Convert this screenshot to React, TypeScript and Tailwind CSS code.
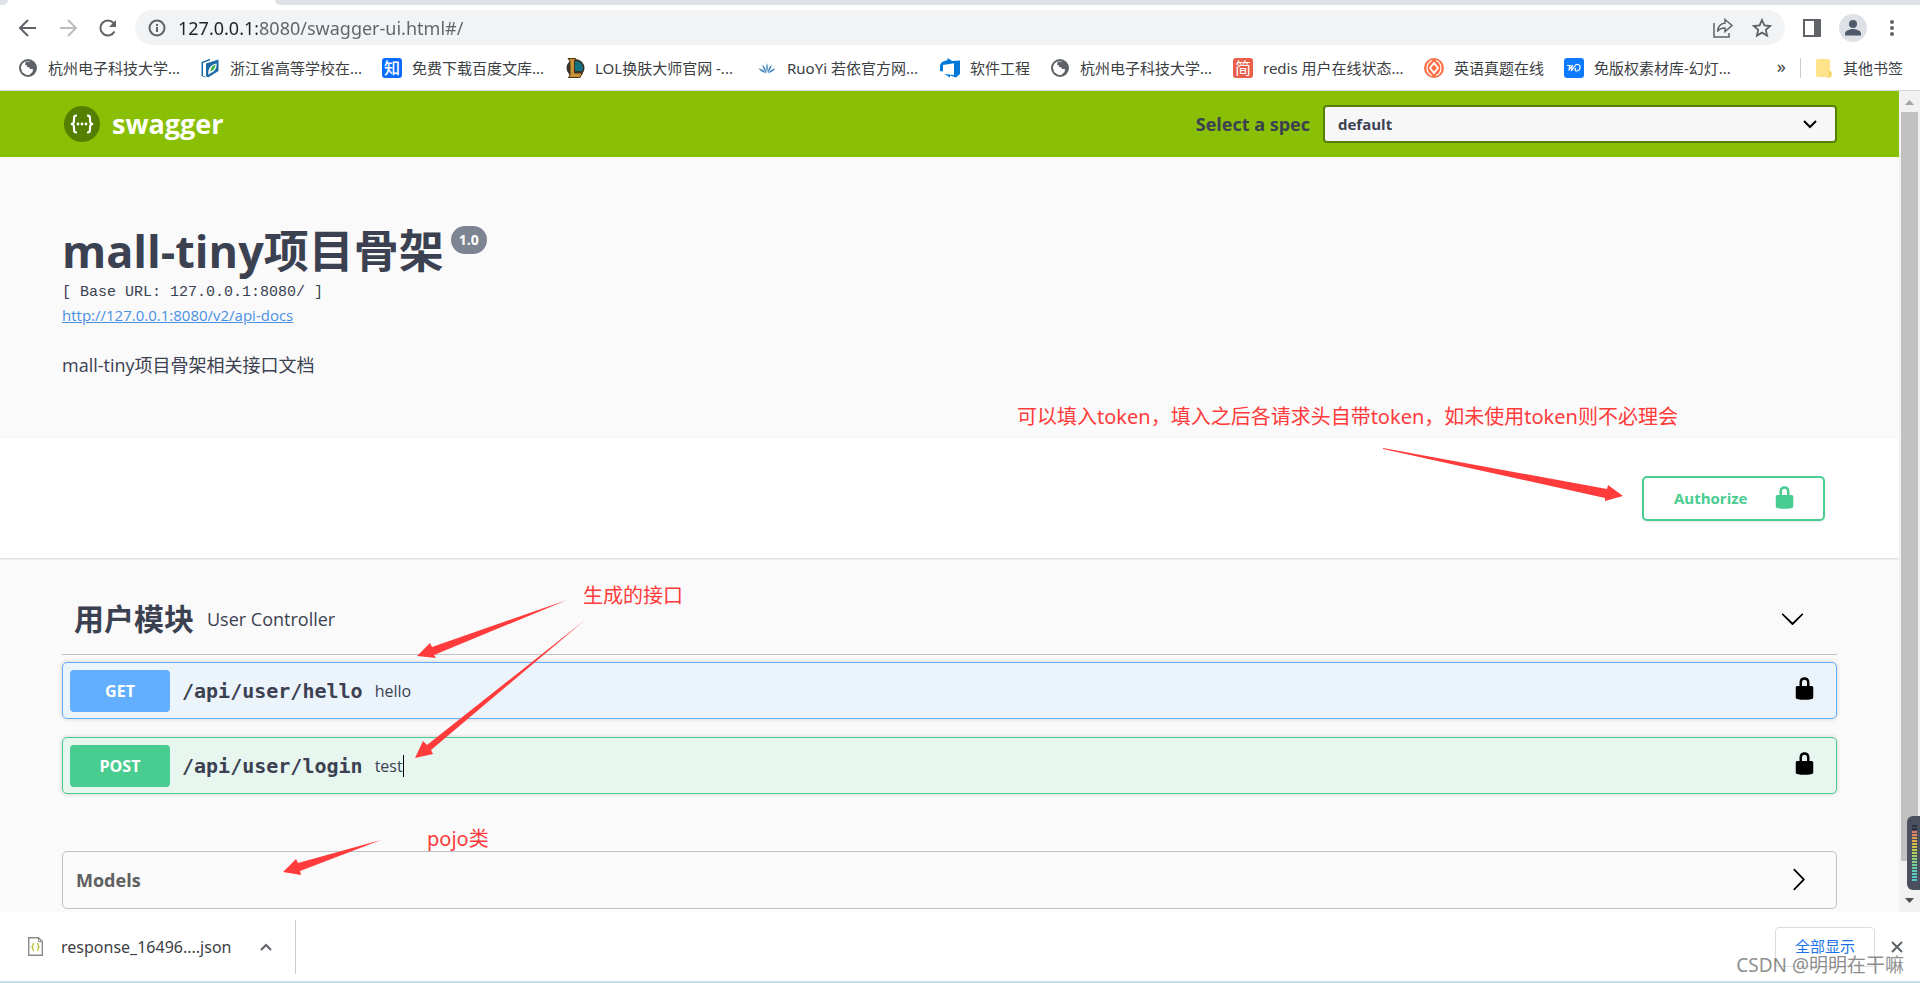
import React from "react";

const sans = "font-['Open_Sans','Noto_Sans_CJK_SC',sans-serif]";
const uiFont = "font-['Noto_Sans','Noto_Sans_CJK_SC',sans-serif]";

/* ---------- icons ---------- */

function LockIcon({ className = "" }: { className?: string }) {
  return (
    <svg className={className} viewBox="0 0 20 20" fill="currentColor" aria-hidden="true">
      <path d="M15.8 8H14V5.6C14 2.703 12.665 1 10 1 7.334 1 6 2.703 6 5.6V8H4c-.553 0-1 .646-1 1.199V17c0 .549.428 1.139.951 1.307l1.197.387C5.672 18.861 6.55 19 7.1 19h5.8c.549 0 1.428-.139 1.951-.307l1.196-.387c.524-.167.953-.757.953-1.306V9.199C17 8.646 16.352 8 15.8 8zM12 8H8V5.199C8 3.754 8.797 3 10 3c1.203 0 2 .754 2 2.199V8z" />
    </svg>
  );
}

function ArrowIcon({ className = "" }: { className?: string }) {
  return (
    <svg className={className} viewBox="0 0 20 20" fill="currentColor" aria-hidden="true">
      <path d="M13.25 10L6.109 2.58c-.268-.27-.268-.707 0-.979.268-.27.701-.27.969 0l7.83 7.908c.268.271.268.709 0 .979l-7.83 7.908c-.268.271-.701.27-.969 0-.268-.269-.268-.707 0-.979L13.25 10z" />
    </svg>
  );
}

function GlobeIcon() {
  return (
    <svg className="size-5" viewBox="0 0 20 20" aria-hidden="true">
      <circle cx="10" cy="10" r="9" fill="#5f6368" />
      <path d="M3 9.500C3.300 6 5.500 3.800 8.500 3.200L12 3v2.500L9 7v2l2.500.5L12 11h3l-.5 3-3 2.800h-2V14L6 12 3 10.500z" fill="#fff" />
      <path d="M10.500 3.500H7.800l-.8 3.500 3.500.5 2 2.500H17L16 6l-3-2.500z" fill="#5f6368" />
      <path d="M3 9c2 0 4 .5 5.500 2s2.500 1.500 3.500 1.500l-1 4.300-2.500.2L4 14z" fill="#fff" />
    </svg>
  );
}

function BookIcon() {
  return (
    <svg className="size-5" viewBox="0 0 20 20" aria-hidden="true">
      <path d="M1.500 4L10 .8v1.400L3 5v13l2.500.5v1L1.500 18z" fill="#1b6aa5" />
      <path d="M6 5.500L18.500 1.500V13L8 19.500 6 18z" fill="#1b6aa5" />
      <path d="M8.500 17c-1-6 2-10.500 8-11.500.5 5-2 8.500-6 9.500z" fill="#fff" />
      <path d="M10.500 13.500c0-4 2-6 5-7 0 3.500-2 6-5 7z" fill="#42b549" />
    </svg>
  );
}

function ZhiIcon() {
  return (
    <span className="flex size-5 items-center justify-center rounded-[3px] bg-[#0a6cff] text-base leading-5 font-medium text-white">
      知
    </span>
  );
}

function JianIcon() {
  return (
    <span className="flex size-5 items-center justify-center rounded-[3px] bg-[#ea5f4a] text-base leading-5 text-white">
      简
    </span>
  );
}

function LolIcon() {
  return (
    <svg className="size-5" viewBox="0 0 20 20" aria-hidden="true">
      <circle cx="10.500" cy="10" r="9" fill="#3a352c" />
      <path d="M10 3.500a6.500 6.500 0 0 1 7 9.500H10z" fill="#12717f" />
      <path d="M3 .5h7.500L9.500 3v12h8l-2.500 4.500H3.500L5 17V3z" fill="#c8923a" stroke="#4a3210" strokeWidth="1" />
    </svg>
  );
}

function LotusIcon() {
  return (
    <svg className="size-5" viewBox="0 0 20 20" fill="#3a82bd" aria-hidden="true">
      <path d="M10 15C9 11 9 8 10 5c1 3 1 6 0 10z" />
      <path d="M9.300 15C7 12.500 5.500 9.500 5.500 6.500 7.500 8.500 9 11.500 9.300 15zM10.700 15c2.300-2.500 3.800-5.500 3.800-8.500-2 2-3.500 5-3.800 8.500z" />
      <path d="M9 15.400C6 14.500 3.200 12.800 1.500 10.500 5 11 7.500 12.900 9 15.400zM11 15.400c3-.9 5.800-2.600 7.500-4.900-3.500.5-6 2.400-7.500 4.900z" />
    </svg>
  );
}

function DevopsIcon() {
  return (
    <svg className="size-5" viewBox="0 0 20 20" fill="#0078d7" aria-hidden="true">
      <path d="M0 7l2-3 5.500-2V0l4.700 3L20 2.500V16l-4 3.500-6-2V19.500L4.500 16l9.500 1V5.200L3 7v6.500L0 13z" />
    </svg>
  );
}

function DiamondIcon() {
  return (
    <svg className="size-5" viewBox="0 0 20 20" aria-hidden="true">
      <circle cx="10" cy="10" r="10" fill="#ff7046" />
      <path d="M8 2.500C4.500 4 3 7 3 10s1.500 6 5 7.500M12 2.500C15.500 4 17 7 17 10s-1.500 6-5 7.500" fill="none" stroke="#fff" strokeWidth="1.200" />
      <path d="M10 3.500l5 6.500-5 6.500L5 10z" fill="#fff" />
      <path d="M10 6.500l3 3.500-3 3.500L7 10z" fill="#ff7046" />
    </svg>
  );
}

function SlideIcon() {
  return (
    <svg className="size-5" viewBox="0 0 20 20" aria-hidden="true">
      <rect width="20" height="20" rx="3" fill="#0d7bff" />
      <path d="M3.500 7.500h2.500L4.800 12.500 8.500 7 7.300 13 12 6.500h1.500c4 0 3 6.500-.8 6.500-2 0-2-1.500-1-2.500" fill="none" stroke="#fff" strokeWidth="1.200" strokeLinecap="round" />
    </svg>
  );
}

const bookmarks = [
  { icon: <GlobeIcon />, title: "杭州电子科技大学...", width: "w-[132px]" },
  { icon: <BookIcon />, title: "浙江省高等学校在...", width: "w-[132px]" },
  { icon: <ZhiIcon />, title: "免费下载百度文库...", width: "w-[133px]" },
  { icon: <LolIcon />, title: "LOL换肤大师官网 -...", width: "w-[142px]" },
  { icon: <LotusIcon />, title: "RuoYi 若依官方网...", width: "w-[133px]" },
  { icon: <DevopsIcon />, title: "软件工程", width: "w-[60px]" },
  { icon: <GlobeIcon />, title: "杭州电子科技大学...", width: "w-[133px]" },
  { icon: <JianIcon />, title: "redis 用户在线状态...", width: "w-[141px]" },
  { icon: <DiamondIcon />, title: "英语真题在线", width: "w-[90px]" },
  { icon: <SlideIcon />, title: "免版权素材库-幻灯...", width: "w-[140px]" },
];

/* ---------- browser chrome ---------- */

function Toolbar() {
  return (
    <div className="flex h-[45px] shrink-0 items-center pl-4 text-[#5f6368]">
      <button aria-label="Back" className="size-6">
        <svg viewBox="0 0 24 24" fill="none" stroke="currentColor" strokeWidth="2">
          <path d="M20 12H4.500M12 4l-8 8 8 8" />
        </svg>
      </button>
      <button aria-label="Forward" className="ml-4 size-6 text-[#bbbdc0]">
        <svg viewBox="0 0 24 24" fill="none" stroke="currentColor" strokeWidth="2">
          <path d="M4 12h15.500M12 4l8 8-8 8" />
        </svg>
      </button>
      <button aria-label="Reload" className="ml-4 size-6">
        <svg viewBox="0 0 24 24" fill="none" stroke="currentColor" strokeWidth="2">
          <path d="M18.500 15.500A7.500 7.500 0 1 1 17.500 7l1.500 2" />
          <path d="M20 4v7h-7z" fill="currentColor" stroke="none" />
        </svg>
      </button>
      <div className="ml-[15px] flex h-[35px] grow items-center rounded-full bg-[#f1f3f4] pr-[11px] pl-[13px]">
        <svg className="size-[18px] shrink-0" viewBox="0 0 18 18" fill="none" stroke="currentColor" strokeWidth="2" aria-hidden="true">
          <circle cx="9" cy="9" r="7.500" />
          <path d="M9 8v5M9 5v2" />
        </svg>
        {/* host part is darker than the rest of the address */}
        <input
          type="text"
          aria-label="Address"
          defaultValue="127.0.0.1:8080/swagger-ui.html#/"
          className={`ml-3 min-w-0 grow bg-[linear-gradient(90deg,#202124_79px,#5f6368_79px)] bg-clip-text text-lg leading-6 text-transparent outline-none ${uiFont}`}
        />
        <button aria-label="Share" className="size-6">
          <svg viewBox="0 0 24 24" fill="none" stroke="currentColor" strokeWidth="1.500">
            <path d="M3 7v14h15v-4" />
            <path d="M14 3.500l7 6-7 6V12c-4 0-6 1-7.500 3.500.5-5 3-8 7.500-8.500z" />
          </svg>
        </button>
        <button aria-label="Bookmark this page" className="ml-[15px] size-6">
          <svg viewBox="0 0 24 24" fill="none" stroke="currentColor" strokeWidth="1.800">
            <path d="M12 4l2.400 5.400 5.800.6-4.400 3.900 1.300 5.700L12 16.600l-5.100 3 1.300-5.700L3.800 10l5.800-.6z" />
          </svg>
        </button>
      </div>
      <button aria-label="Side panel" className="ml-[15px] size-6">
        <svg viewBox="0 0 24 24" fill="currentColor">
          <path fillRule="evenodd" d="M3 3h18v18H3zM5 5v14h9V5z" />
        </svg>
      </button>
      <button aria-label="Profile" className="ml-[15px] size-7 rounded-full bg-[#dee1e6] text-[#4f5b6c]">
        <svg viewBox="0 0 28 28" fill="currentColor">
          <circle cx="14" cy="10" r="4" />
          <path d="M6 21.500v-2c0-3 5-4.500 8-4.500s8 1.500 8 4.500v2z" />
        </svg>
      </button>
      <button aria-label="Menu" className="mr-4 ml-[13px] size-6">
        <svg viewBox="0 0 24 24" fill="currentColor">
          <circle cx="12" cy="6" r="2" />
          <circle cx="12" cy="12" r="2" />
          <circle cx="12" cy="18" r="2" />
        </svg>
      </button>
    </div>
  );
}

function BookmarkBar() {
  return (
    <nav className={`flex h-[41px] shrink-0 items-center border-b border-[#d5d7db] pr-[17px] pb-1 pl-[18px] text-[15px] leading-5 text-[#3c4043] ${uiFont}`}>
      <ul className="flex gap-5">
        {bookmarks.map((b, i) => (
          <li key={i}>
            <a href="#" className="flex items-center gap-[10px] whitespace-nowrap">
              {b.icon}
              <span className={b.width}>{b.title}</span>
            </a>
          </li>
        ))}
      </ul>
      <button aria-label="More bookmarks" className="ml-auto pb-1 text-lg leading-5">»</button>
      <span className="ml-[14px] h-5 w-px bg-[#c9cbcf]" />
      <a href="#" className="ml-[14px] flex items-center gap-[11px] whitespace-nowrap">
        <svg className="h-5 w-[17px]" viewBox="0 0 17 20" aria-hidden="true">
          <path d="M1 3a2 2 0 0 1 2-2h10a2 2 0 0 1 2 2v11h1v3a2 2 0 0 1-2 2H3a2 2 0 0 1-2-2z" fill="#ffe38a" />
          <path d="M12 19h2a2 2 0 0 0 2-2v-3h-1.500v3" fill="none" stroke="#f7cd55" strokeWidth="1.200" />
        </svg>
        其他书签
      </a>
    </nav>
  );
}

function DownloadBar() {
  return (
    <footer className={`relative flex h-[71px] shrink-0 items-center border-b-2 border-[#c4dfe6] bg-white pr-[17px] pl-7 ${uiFont}`}>
      <svg className="h-[19px] w-[15px]" viewBox="0 0 15 19" aria-hidden="true">
        <path d="M.7.7h9.800l3.800 3.800v13.800H.7z" fill="#fff" stroke="#8a8a8a" strokeWidth="1.400" />
        <path d="M10.500.7v3.800h3.800" fill="none" stroke="#8a8a8a" />
        <path d="M6 6.500c-2 0-.5 3-2 3.500 1.500.5 0 3.500 2 3.500M9 6.500c2 0 .5 3 2 3.500-1.500.5 0 3.500-2 3.500" fill="none" stroke="#b9bd2e" strokeWidth="1.300" />
      </svg>
      <span className="ml-[18px] text-base text-[#3c4043]">response_16496....json</span>
      <button aria-label="Download options" className="ml-[29px] size-3 text-[#5f6368]">
        <svg viewBox="0 0 12 12" fill="none" stroke="currentColor" strokeWidth="2">
          <path d="M1 9l5-5 5 5" />
        </svg>
      </button>
      <span className="ml-[23px] h-[54px] w-px bg-[#c9cbcf]" />
      <button className="ml-auto h-10 rounded border border-[#dadce0] px-[19px] text-[15px] text-[#1a73e8]">全部显示</button>
      <button aria-label="Close" className="ml-4 size-3 text-[#5f6368]">
        <svg viewBox="0 0 12 12" fill="none" stroke="currentColor" strokeWidth="2">
          <path d="M1 1l10 10M11 1L1 11" />
        </svg>
      </button>
      <span className="absolute right-4 bottom-1 text-[19px] leading-6 text-[#6f6f6f]/80">CSDN @明明在干嘛</span>
    </footer>
  );
}

const meter = [
  "bg-[#2f3340]", "bg-[#2f3340]",
  "bg-[#e07a66]", "bg-[#e38a5c]", "bg-[#e39a50]", "bg-[#deac48]", "bg-[#d8bb45]",
  "bg-[#cfc648]", "bg-[#c3ca4e]", "bg-[#b3cc58]", "bg-[#a2cf66]", "bg-[#92d076]",
  "bg-[#84d088]", "bg-[#76d09a]", "bg-[#6acfa8]", "bg-[#60ceb4]", "bg-[#58ccbe]",
  "bg-[#54cac4]", "bg-[#50c8c8]",
];

function Scrollbar() {
  return (
    <div className="flex w-[21px] shrink-0 flex-col items-center bg-[#f1f1f1]">
      <svg className="h-[21px] w-[9px] shrink-0" viewBox="0 0 9 21" fill="#a3a3a3" aria-hidden="true">
        <path d="M0 14l4.500-5L9 14z" />
      </svg>
      <div className="h-[749px] w-[17px] shrink-0 bg-[#c1c1c1]" />
      <svg className="mt-auto mb-2 h-[6px] w-[9px] shrink-0" viewBox="0 0 9 6" fill="#505050" aria-hidden="true">
        <path d="M0 0h9L4.500 5z" />
      </svg>
    </div>
  );
}

/* ---------- swagger page ---------- */

const operations = [
  {
    method: "GET",
    path: "/api/user/hello",
    summary: "hello",
    box: "border-[#61affe] bg-[#ebf3fb]",
    badge: "bg-[#61affe]",
  },
  {
    method: "POST",
    path: "/api/user/login",
    summary: "test",
    box: "border-[#49cc90] bg-[#e8f6f0]",
    badge: "bg-[#49cc90]",
    caret: true,
  },
];

function Topbar() {
  return (
    <header className="bg-[#89bf04]">
      <div className="mx-auto flex h-[66px] max-w-[1825px] items-center px-[25px]">
        <a href="#" className="flex items-center gap-3 text-[27px] leading-9 font-bold text-white">
          <svg className="ml-[2px] size-9" viewBox="0 0 36 36" aria-hidden="true">
            <circle cx="18" cy="18" r="18" fill="#547f00" />
            <g fill="none" stroke="#fff" strokeWidth="2.200">
              <path d="M13 9.500c-3 0-3 1-3 4s0 4-3 4.500c3 .5 3 1.500 3 4.500s0 4 3 4" />
              <path d="M23 9.500c3 0 3 1 3 4s0 4 3 4.500c-3 .5-3 1.500-3 4.500s0 4-3 4" />
            </g>
            <g fill="#fff">
              <circle cx="14" cy="18" r="1.400" />
              <circle cx="18" cy="18" r="1.400" />
              <circle cx="22" cy="18" r="1.400" />
            </g>
          </svg>
          swagger
        </a>
        <label htmlFor="spec" className="ml-auto text-lg font-bold text-[#3b4151]">
          Select a spec
        </label>
        <div className="relative ml-[13px] w-[514px]">
          <select
            id="spec"
            className="block h-[38px] w-full appearance-none rounded border-2 border-[#547f00] bg-[#f7f7f7] px-[13px] text-[15px] font-bold text-[#3b4151]"
          >
            <option>default</option>
          </select>
          <svg className="pointer-events-none absolute top-3 right-5 size-[14px]" viewBox="0 0 14 14" fill="none" stroke="#000" strokeWidth="2" aria-hidden="true">
            <path d="M1 4l6 6 6-6" />
          </svg>
        </div>
      </div>
    </header>
  );
}

function Info() {
  return (
    <section className="mx-auto h-[281px] max-w-[1825px] px-[25px] pt-[62px] text-[#3b4151]">
      <h1 className="flex items-start text-[45px] leading-[64px] font-bold">
        mall-tiny项目骨架
        <span className="mt-[7px] ml-[7px] rounded-full bg-[#7d8492] px-2 text-sm leading-7 text-white">1.0</span>
      </h1>
      <p className="font-['Liberation_Mono',monospace] text-[15px] leading-5">[ Base URL: 127.0.0.1:8080/ ]</p>
      <a href="#" className="block w-fit text-[15px] leading-6 text-[#4990e2] underline">
        http://127.0.0.1:8080/v2/api-docs
      </a>
      <p className="mt-[26px] text-lg leading-6">mall-tiny项目骨架相关接口文档</p>
    </section>
  );
}

function Operations() {
  return (
    <section className="mx-auto max-w-[1825px] px-[25px] pt-[30px] text-[#3b4151]">
      <button className="flex h-[67px] w-full items-center border-b border-[#3b4151]/30 pr-8 pb-[5px] pl-3 text-left">
        <h2 className="text-[30px] leading-10 font-bold">用户模块</h2>
        <span className="ml-[13px] text-lg">User Controller</span>
        <ArrowIcon className="ml-auto size-[25px] rotate-90 text-black" />
      </button>
      <div className="mt-[7px] flex flex-col gap-[18px]">
        {operations.map((op) => (
          <div key={op.path} className={`flex h-[57px] items-center rounded-[5px] border px-[7px] shadow-[0_0_4px_rgba(0,0,0,0.19)] ${op.box}`}>
            <span className={`w-[100px] rounded text-center text-base leading-[42px] font-bold text-white ${op.badge}`}>{op.method}</span>
            <a href="#" className="ml-3 font-['DejaVu_Sans_Mono',monospace] text-xl font-bold">{op.path}</a>
            <span className="ml-3 text-base">{op.summary}</span>
            {op.caret && <span className="h-[22px] w-px bg-black" />}
            <button aria-label={`Authorize ${op.path}`} className="mr-3 mb-1 ml-auto size-[25px] text-black">
              <LockIcon />
            </button>
          </div>
        ))}
      </div>
    </section>
  );
}

function Models() {
  return (
    <section className="mx-auto mt-[57px] max-w-[1825px] px-[25px]">
      <button className="flex h-[58px] w-full items-center rounded-[5px] border border-[#3b4151]/30 pr-[25px] pl-[13px] text-left text-lg font-bold text-[#606060]">
        Models
        <ArrowIcon className="mb-[2px] ml-auto size-[25px] text-black" />
      </button>
    </section>
  );
}

/* red hand-drawn notes laid over the page */
function Annotations() {
  return (
    <div className={`pointer-events-none absolute inset-0 text-xl leading-6 text-[#ff3b3b] ${uiFont}`}>
      <span className="absolute top-[314px] left-[1017px] whitespace-nowrap">
        可以填入token，填入之后各请求头自带token，如未使用token则不必理会
      </span>
      <span className="absolute top-[493px] left-[583px] whitespace-nowrap">生成的接口</span>
      <span className="absolute top-[736px] left-[427px] whitespace-nowrap">pojo类</span>
      <svg className="absolute top-0 left-0 h-[821px] w-[1899px]" viewBox="0 91 1899 821" fill="currentColor" aria-hidden="true">
        <path d="M1383 448L1607 489l1-4 15 11-18 5v-3L1383 449z" />
        <path d="M567 600L432 647l-2-4-13 13 19 2-2-3z" />
        <path d="M585 620L427 745l-4-4-8 17 18-4-2-4z" />
        <path d="M381 840L298 863l-2-4-13 13 18 3-1-4z" />
      </svg>
    </div>
  );
}

export default function App() {
  return (
    <div className="flex h-screen flex-col overflow-hidden bg-white">
      <div className="flex h-[5px] shrink-0 justify-between">
        <span className="w-2 rounded-br-lg bg-[#dee1e6]" />
        <span className="ml-[267px] grow rounded-bl-lg bg-[#dee1e6]" />
      </div>
      <Toolbar />
      <BookmarkBar />
      <div className="relative flex min-h-0 grow">
        <main className={`relative min-w-0 grow overflow-hidden bg-[#fafafa] ${sans}`}>
          <Topbar />
          <Info />
          <section className="bg-white shadow-[0_1px_2px_rgba(0,0,0,0.15)]">
            <div className="mx-auto flex h-[120px] max-w-[1825px] items-center justify-end px-[37px]">
              <button className="flex h-[45px] w-[183px] items-center justify-between rounded-[5px] border-2 border-[#49cc90] pr-[26px] pl-[30px] text-[15px] font-bold text-[#49cc90] shadow-[0_1px_2px_rgba(0,0,0,0.1)]">
                Authorize
                <LockIcon className="mb-[2px] size-[25px]" />
              </button>
            </div>
          </section>
          <Operations />
          <Models />
          <Annotations />
        </main>
        <Scrollbar />
        <div className="absolute right-0 bottom-[22px] flex h-[74px] w-[13px] flex-col items-end gap-px rounded-l-md bg-[#4b505e] pt-[9px] pr-[3px]">
          {meter.map((color, i) => (
            <span key={i} className={`h-[2px] w-[5px] shrink-0 ${color}`} />
          ))}
        </div>
      </div>
      <DownloadBar />
    </div>
  );
}
